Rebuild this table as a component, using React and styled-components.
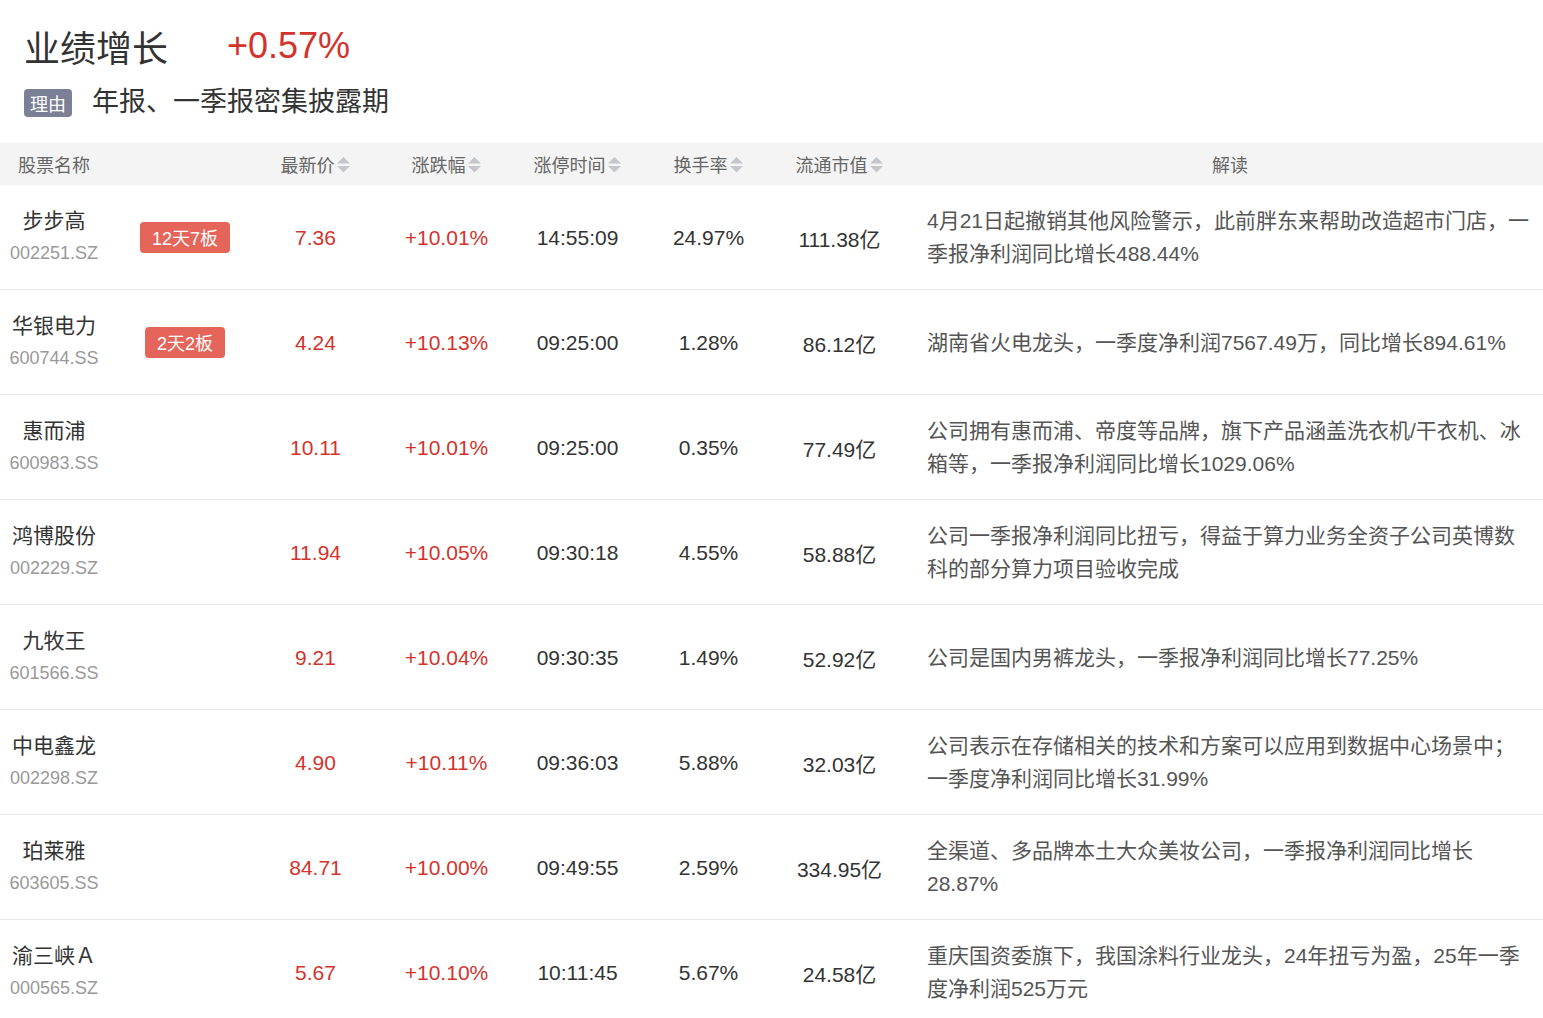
import React from "react"
import styled, { createGlobalStyle } from "styled-components"

const GlobalStyle = createGlobalStyle`
  html, body {
    margin: 0;
    padding: 0;
    background: #fff;
    overflow: hidden;
  }
  body {
    font-family: "Liberation Sans", "Noto Sans CJK SC", sans-serif;
  }
`

const stocks = [
  { name: "步步高", code: "002251.SZ", tag: "12天7板", price: "7.36", change: "+10.01%", time: "14:55:09", turnover: "24.97%", cap: "111.38亿", note: "4月21日起撤销其他风险警示，此前胖东来帮助改造超市门店，一季报净利润同比增长488.44%" },
  { name: "华银电力", code: "600744.SS", tag: "2天2板", price: "4.24", change: "+10.13%", time: "09:25:00", turnover: "1.28%", cap: "86.12亿", note: "湖南省火电龙头，一季度净利润7567.49万，同比增长894.61%" },
  { name: "惠而浦", code: "600983.SS", price: "10.11", change: "+10.01%", time: "09:25:00", turnover: "0.35%", cap: "77.49亿", note: "公司拥有惠而浦、帝度等品牌，旗下产品涵盖洗衣机/干衣机、冰箱等，一季报净利润同比增长1029.06%" },
  { name: "鸿博股份", code: "002229.SZ", price: "11.94", change: "+10.05%", time: "09:30:18", turnover: "4.55%", cap: "58.88亿", note: "公司一季报净利润同比扭亏，得益于算力业务全资子公司英博数科的部分算力项目验收完成" },
  { name: "九牧王", code: "601566.SS", price: "9.21", change: "+10.04%", time: "09:30:35", turnover: "1.49%", cap: "52.92亿", note: "公司是国内男裤龙头，一季报净利润同比增长77.25%" },
  { name: "中电鑫龙", code: "002298.SZ", price: "4.90", change: "+10.11%", time: "09:36:03", turnover: "5.88%", cap: "32.03亿", note: "公司表示在存储相关的技术和方案可以应用到数据中心场景中；一季度净利润同比增长31.99%" },
  { name: "珀莱雅", code: "603605.SS", price: "84.71", change: "+10.00%", time: "09:49:55", turnover: "2.59%", cap: "334.95亿", note: "全渠道、多品牌本土大众美妆公司，一季报净利润同比增长28.87%" },
  { name: "渝三峡Ａ", code: "000565.SZ", price: "5.67", change: "+10.10%", time: "10:11:45", turnover: "5.67%", cap: "24.58亿", note: "重庆国资委旗下，我国涂料行业龙头，24年扭亏为盈，25年一季度净利润525万元" },
]

const sortable = ["最新价", "涨跌幅", "涨停时间", "换手率", "流通市值"]

function SortIcon() {
  return (
    <Arrows width="15" height="19" viewBox="0 0 15 19">
      <path d="M7.5 2 L14 8.5 L1 8.5 Z" fill="#c4c6cb" />
      <path d="M7.5 17.5 L14 11 L1 11 Z" fill="#c4c6cb" />
    </Arrows>
  )
}

export default function App() {
  return (
    <Page>
      <GlobalStyle />
      <Top>
        <TitleLine>
          <Title>业绩增长</Title>
          <Rate>+0.57%</Rate>
        </TitleLine>
        <ReasonLine>
          <ReasonTag>理由</ReasonTag>
          <Reason>年报、一季报密集披露期</Reason>
        </ReasonLine>
      </Top>
      <Table>
        <HeadRow>
          <HeadCell>股票名称</HeadCell>
          <HeadCell />
          {sortable.map((h) => (
            <HeadCell key={h}>
              {h}
              <SortIcon />
            </HeadCell>
          ))}
          <HeadCell $note>解读</HeadCell>
        </HeadRow>
        {stocks.map((s) => (
          <Row key={s.code}>
            <NameCell>
              <Name>{s.name}</Name>
              <Code>{s.code}</Code>
            </NameCell>
            <TagCell>{s.tag && <Streak>{s.tag}</Streak>}</TagCell>
            <Value $red>{s.price}</Value>
            <Value $red>{s.change}</Value>
            <Value>{s.time}</Value>
            <Value>{s.turnover}</Value>
            <Value>{s.cap}</Value>
            <Note>{s.note}</Note>
          </Row>
        ))}
      </Table>
    </Page>
  )
}

const Page = styled.div`
  width: 1543px;
  color: #333;
`

const Top = styled.div`
  padding: 23px 24px 26px;
  display: flex;
  flex-direction: column;
  gap: 19px;
`

const TitleLine = styled.div`
  display: flex;
  align-items: center;
  height: 46px;
  gap: 59px;
`

const Title = styled.div`
  font-size: 36px;
  color: #333;
`

const Rate = styled.div`
  font-size: 36px;
  color: #d2342c;
`

const ReasonLine = styled.div`
  display: flex;
  align-items: center;
  gap: 20px;
  height: 29px;
`

const ReasonTag = styled.span`
  width: 48px;
  height: 28px;
  border-radius: 4px;
  background: #7b8096;
  color: #fff;
  font-size: 18px;
  display: flex;
  align-items: center;
  justify-content: center;
`

const Reason = styled.span`
  font-size: 27px;
  line-height: 29px;
  color: #333;
`

const Table = styled.div`
  display: flex;
  flex-direction: column;
`

const grid = `
  display: grid;
  grid-template-columns: 108px 142px repeat(5, 131px) 1fr;
`

const HeadRow = styled.div`
  ${grid}
  height: 42px;
  background: #f4f4f4;
`

const HeadCell = styled.div`
  display: flex;
  align-items: center;
  justify-content: center;
  font-size: 18px;
  color: #666;
  padding: ${(p) => (p.$note ? "0 10px 0 22px" : "0")};
`

const Arrows = styled.svg`
  margin-left: 1px;
`

const Row = styled.div`
  ${grid}
  height: 104px;
  border-bottom: 1px solid #e9e9e9;
`

const NameCell = styled.div`
  display: flex;
  flex-direction: column;
  align-items: center;
  justify-content: center;
`

const Name = styled.div`
  font-size: 21px;
  line-height: 33px;
  color: #333;
`

const Code = styled.div`
  font-size: 18px;
  line-height: 33px;
  color: #999;
`

const TagCell = styled.div`
  display: flex;
  align-items: center;
  justify-content: center;
  padding-left: 12px;
`

const Streak = styled.span`
  padding: 0 12px;
  height: 31px;
  border-radius: 4px;
  background: #e6655a;
  color: #fff;
  font-size: 18px;
  display: flex;
  align-items: center;
`

const Value = styled.div`
  display: flex;
  align-items: center;
  justify-content: center;
  font-size: 21px;
  padding-top: 2px;
  color: ${(p) => (p.$red ? "#d2342c" : "#333")};
`

const Note = styled.div`
  display: flex;
  align-items: center;
  padding: 0 10px 0 22px;
  font-size: 21px;
  line-height: 33px;
  color: #555;
`
